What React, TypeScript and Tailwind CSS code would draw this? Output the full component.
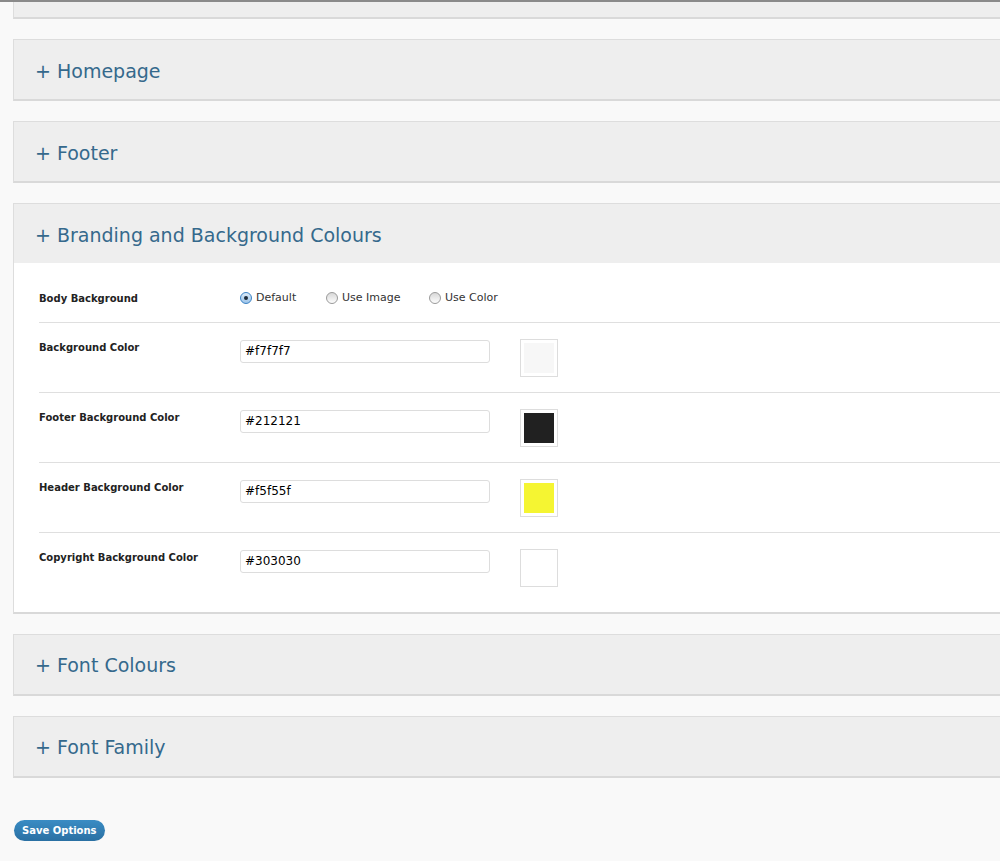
import { useState } from 'react';

type ColorRow = {
    label: string;
    value: string;
    swatch: string | null;
};

const rows: ColorRow[] = [
    { label: 'Background Color', value: '#f7f7f7', swatch: '#f7f7f7' },
    { label: 'Footer Background Color', value: '#212121', swatch: '#212121' },
    { label: 'Header Background Color', value: '#f5f55f', swatch: '#f5f532' },
    { label: 'Copyright Background Color', value: '#303030', swatch: null },
];

function PanelHeader({ title }: { title: string }) {
    return (
        <div className="flex h-[59px] items-center bg-[#eeeeee] pl-[21px] pt-[3px] text-[19px] text-[#35698c]">
            <span>+ {title}</span>
        </div>
    );
}

function ClosedPanel({ title }: { title: string }) {
    return (
        <div className="mt-[20px] w-[1100px] border-t border-b-2 border-l border-t-[#dddddd] border-b-[#d9d9d9] border-l-[#dddddd]">
            <PanelHeader title={title} />
        </div>
    );
}

function Radio({ checked, label }: { checked: boolean; label: string }) {
    return (
        <label className="flex items-center gap-[4px] text-[11px] text-[#333333]">
            {checked ? (
                <span className="flex h-[12px] w-[12px] items-center justify-center rounded-full border border-[#3b82c4] bg-gradient-to-b from-[#dcebf8] to-[#9cc4ea]">
                    <span className="h-[4px] w-[4px] rounded-full bg-[#1d2b3a]" />
                </span>
            ) : (
                <span className="h-[12px] w-[12px] rounded-full border border-[#9a9a9a] bg-gradient-to-b from-[#d8d8d8] to-[#fdfdfd]" />
            )}
            <span>{label}</span>
        </label>
    );
}

export default function App() {
    const [values, setValues] = useState(rows.map((r) => r.value));

    return (
        <div
            className="h-[861px] w-[1000px] overflow-hidden bg-[#f9f9f9]"
            style={{ fontFamily: '"DejaVu Sans", Verdana, sans-serif' }}
        >
            <div className="h-[2px] bg-[#8a8a8a]" />
            <div className="ml-[13px]">
                <div className="h-[17px] w-[1100px] border-b-2 border-l border-b-[#d9d9d9] border-l-[#dddddd] bg-[#eeeeee]" />

                <ClosedPanel title="Homepage" />
                <ClosedPanel title="Footer" />

                <div className="mt-[20px] w-[1100px] border-t border-b-2 border-l border-t-[#dddddd] border-b-[#d9d9d9] border-l-[#dddddd]">
                    <PanelHeader title="Branding and Background Colours" />
                    <div className="bg-white pb-[10px] pl-[25px] pt-[27px]">
                        <div className="flex items-center pb-[15px]">
                            <div className="w-[201px] text-[10px] font-bold text-[#222222]">
                                Body Background
                            </div>
                            <div className="flex items-center">
                                <div className="w-[86px]">
                                    <Radio checked label="Default" />
                                </div>
                                <div className="w-[103px]">
                                    <Radio checked={false} label="Use Image" />
                                </div>
                                <Radio checked={false} label="Use Color" />
                            </div>
                        </div>

                        {rows.map((row, i) => (
                            <div
                                key={row.label}
                                className="flex items-start border-t border-[#dfdfdf] pb-[15px] pt-[16px]"
                            >
                                <div className="w-[201px] pt-[2px] text-[10px] leading-[14px] font-bold text-[#222222]">
                                    {row.label}
                                </div>
                                <input
                                    value={values[i]}
                                    onChange={(e) =>
                                        setValues(
                                            values.map((v, j) =>
                                                j === i ? e.target.value : v,
                                            ),
                                        )
                                    }
                                    className="mt-[1px] h-[23px] w-[250px] rounded-[3px] border border-[#dddddd] bg-white px-[4px] text-[12px] text-black outline-none"
                                />
                                <div className="ml-[30px] h-[38px] w-[38px] border border-[#dddddd] bg-white p-[3px]">
                                    {row.swatch && (
                                        <div
                                            className="h-full w-full"
                                            style={{ backgroundColor: row.swatch }}
                                        />
                                    )}
                                </div>
                            </div>
                        ))}
                    </div>
                </div>

                <ClosedPanel title="Font Colours" />
                <ClosedPanel title="Font Family" />

                <button className="ml-[1px] mt-[42px] block h-[21px] rounded-full bg-gradient-to-b from-[#3a8cc4] to-[#2a70a3] px-[8px] text-[10px] font-bold text-white">
                    Save Options
                </button>
            </div>
        </div>
    );
}
